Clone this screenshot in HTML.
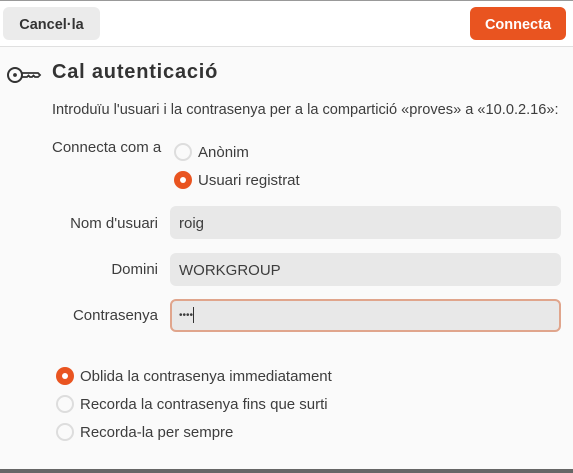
<!DOCTYPE html><html><head><style>
body{margin:0;width:573px;height:473px;background:#fafafa;font-family:"Liberation Sans","DejaVu Sans",sans-serif;color:#3d3d3d;position:relative;overflow:hidden;font-size:15px}
.a{position:absolute}
.hdr{left:0;top:0;width:573px;height:47px;background:#fff;border-top:1px solid #999;border-bottom:1px solid #e0e0e0;box-sizing:border-box}
.btn{top:7px;height:33px;border-radius:6px;font-weight:bold;font-size:14.5px;display:flex;align-items:center;justify-content:center;padding-top:2px;box-sizing:border-box}
.r{width:18px;height:18px;border-radius:50%;box-sizing:border-box;border:2px solid #ddd;background:#fafafa}
.r.on{border:none;background:#e95420}
.r.on::after{content:"";position:absolute;left:6px;top:6px;width:6px;height:6px;border-radius:50%;background:#fff}
.lbl{width:106px;left:52px;text-align:right}
.ent{left:170px;width:391px;height:33px;background:#e8e8e8;border-radius:6px;box-sizing:border-box;padding-left:9px;line-height:35px}
</style></head><body>
<div class="a hdr"></div>
<div class="a btn" style="left:3px;width:97px;background:#ebebeb;color:#333">Cancel·la</div>
<div class="a btn" style="left:470px;width:96px;background:#e95420;color:#fff">Connecta</div>
<svg class="a" style="left:6px;top:65px" width="36" height="20" viewBox="0 0 36 20"><circle cx="9" cy="10" r="7" fill="none" stroke="#333" stroke-width="2"/><circle cx="9" cy="10" r="1.9" fill="#333"/><path d="M16 8h16l2 2-2 2h-3l-1.5-1.5L26 12h-2l-1.5-1.5L21 12h-5" fill="none" stroke="#333" stroke-width="1.8"/></svg>
<div class="a" style="left:52px;top:61px;font-size:20px;font-weight:bold;color:#333;letter-spacing:0.8px">Cal autenticació</div>
<div class="a" style="left:52px;top:102px;font-size:14.6px">Introduïu l'usuari i la contrasenya per a la compartició «proves» a «10.0.2.16»:</div>
<div class="a" style="left:52px;top:139px">Connecta com a</div>
<div class="a r" style="left:174px;top:143px"></div><div class="a" style="left:198px;top:144px">Anònim</div>
<div class="a r on" style="left:174px;top:171px"></div><div class="a" style="left:198px;top:172px">Usuari registrat</div>
<div class="a lbl" style="top:215px">Nom d'usuari</div><div class="a ent" style="top:206px">roig</div>
<div class="a lbl" style="top:261px">Domini</div><div class="a ent" style="top:253px">WORKGROUP</div>
<div class="a lbl" style="top:307px">Contrasenya</div><div class="a ent" style="top:299px;border:2px solid #e0a58c;padding-left:7px;line-height:29px;font-size:10px">••••<span style="display:inline-block;width:1px;height:16px;background:#333;vertical-align:middle"></span></div>
<div class="a r on" style="left:56px;top:367px"></div><div class="a" style="left:80px;top:368px">Oblida la contrasenya immediatament</div>
<div class="a r" style="left:56px;top:395px"></div><div class="a" style="left:80px;top:396px">Recorda la contrasenya fins que surti</div>
<div class="a r" style="left:56px;top:423px"></div><div class="a" style="left:80px;top:424px">Recorda-la per sempre</div>
<div class="a" style="left:0;top:469px;width:573px;height:4px;background:#666"></div>
</body></html>
